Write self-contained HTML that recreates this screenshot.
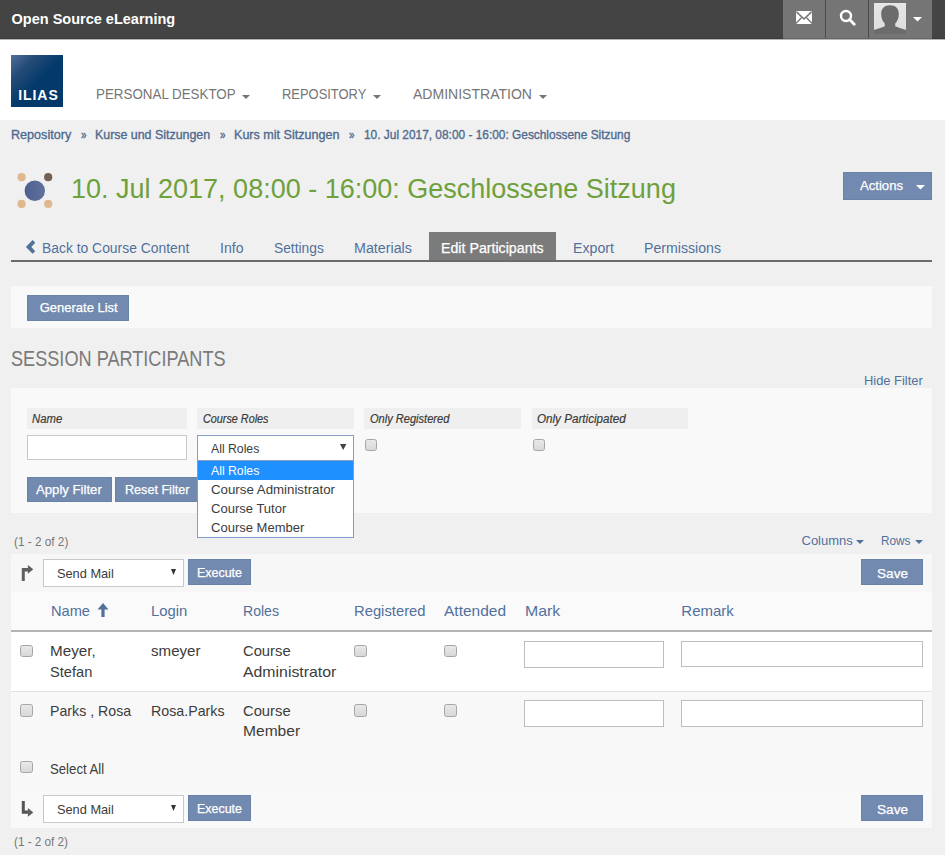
<!DOCTYPE html>
<html><head><meta charset="utf-8"><title>ILIAS</title>
<style>
html,body{margin:0;padding:0;}
body{width:945px;height:855px;overflow:hidden;position:relative;background:#f0f0f0;font-family:"Liberation Sans",sans-serif;}
body>div,body>span,body>svg{position:absolute;}
.t{white-space:nowrap;line-height:1;transform-origin:0 0;}
</style></head><body>
<div style="left:0px;top:0px;width:945px;height:39px;background:#444;"></div>
<div style="left:783px;top:0px;width:149px;height:39px;background:#757575;"></div>
<div style="left:825px;top:0px;width:1px;height:39px;background:#4a4a4a;"></div>
<div style="left:868px;top:0px;width:1px;height:39px;background:#4a4a4a;"></div>
<div style="left:0px;top:38px;width:945px;height:1px;background:#3a3a3a;"></div>
<div style="left:783px;top:38px;width:149px;height:1px;background:#666;"></div>
<div style="left:0px;top:39px;width:945px;height:1px;background:#b5b5b5;"></div>
<span class="t" style="left:11.60px;top:11.98px;font-size:14.5px;color:#fff;font-weight:bold;">Open Source eLearning</span>
<svg style="left:796px;top:11px" width="16" height="13" viewBox="0 0 16 13"><rect x="0" y="0" width="16" height="13" fill="#fff"/><path d="M0.5 0.8 L8 8 L15.5 0.8" stroke="#757575" stroke-width="1.6" fill="none"/><path d="M0 12.5 L5.6 6.5 M16 12.5 L10.4 6.5" stroke="#757575" stroke-width="1.2" fill="none"/></svg>
<svg style="left:839px;top:9px" width="17" height="17" viewBox="0 0 17 17"><circle cx="7" cy="7" r="5" stroke="#fff" stroke-width="2.4" fill="none"/><path d="M10.6 10.6 L15.2 15.2" stroke="#fff" stroke-width="2.8" stroke-linecap="round"/></svg>
<svg style="left:874px;top:3px" width="32" height="31" viewBox="0 0 32 31"><defs><linearGradient id="av" x1="0" y1="0" x2="0" y2="1"><stop offset="0" stop-color="#e6e6e6"/><stop offset="1" stop-color="#dcdcdc"/></linearGradient></defs><rect width="32" height="31" fill="url(#av)"/><path d="M16 2.2 C10.5 2.2 7.2 5.5 7.2 11 C7.2 15 8.6 18.5 10.8 20.5 L10.8 23.3 C6.5 25.2 2.5 26.3 0 27 L0 31 L32 31 L32 27 C29.5 26.3 25.5 25.2 21.2 23.3 L21.2 20.5 C23.4 18.5 24.8 15 24.8 11 C24.8 5.5 21.5 2.2 16 2.2 Z" fill="#6c6c6c"/></svg>
<svg style="left:913px;top:16.5px" width="9" height="5" viewBox="0 0 9 5"><path d="M0 0 L9 0 L4.5 4.5 Z" fill="#fff"/></svg>
<div style="left:0px;top:40px;width:945px;height:80px;background:#fff;"></div>
<div style="left:11px;top:55px;width:52px;height:52px;background:linear-gradient(135deg,#52709a 0%,#244b77 25%,#053b6b 50%,#013869 100%);"></div>
<span class="t" style="left:18.20px;top:87.60px;font-size:14px;color:#fff;font-weight:bold;letter-spacing:0.95px;">ILIAS</span>
<span class="t" style="left:95.70px;top:85.83px;font-size:15.5px;color:#757575;transform:scaleX(0.8626);">PERSONAL DESKTOP</span>
<svg style="left:241.8px;top:95px" width="8" height="4" viewBox="0 0 8 4"><path d="M0 0 L8 0 L4 4 Z" fill="#757575"/></svg>
<span class="t" style="left:281.70px;top:85.83px;font-size:15.5px;color:#757575;transform:scaleX(0.8340);">REPOSITORY</span>
<svg style="left:372.8px;top:95px" width="8" height="4" viewBox="0 0 8 4"><path d="M0 0 L8 0 L4 4 Z" fill="#757575"/></svg>
<span class="t" style="left:413.30px;top:85.83px;font-size:15.5px;color:#757575;transform:scaleX(0.9052);">ADMINISTRATION</span>
<svg style="left:539px;top:95px" width="8" height="4" viewBox="0 0 8 4"><path d="M0 0 L8 0 L4 4 Z" fill="#757575"/></svg>
<span class="t" style="left:11.40px;top:127.95px;font-size:13px;color:#4f6a8f;transform:scaleX(0.9688);-webkit-text-stroke:0.35px #4f6a8f;">Repository</span>
<span class="t" style="left:80.80px;top:127.95px;font-size:13px;color:#4f6a8f;transform:scaleX(0.7609);-webkit-text-stroke:0.35px #4f6a8f;">»</span>
<span class="t" style="left:95.20px;top:127.95px;font-size:13px;color:#4f6a8f;transform:scaleX(0.9537);-webkit-text-stroke:0.35px #4f6a8f;">Kurse und Sitzungen</span>
<span class="t" style="left:219.80px;top:127.95px;font-size:13px;color:#4f6a8f;transform:scaleX(0.7609);-webkit-text-stroke:0.35px #4f6a8f;">»</span>
<span class="t" style="left:234.30px;top:127.95px;font-size:13px;color:#4f6a8f;transform:scaleX(0.9660);-webkit-text-stroke:0.35px #4f6a8f;">Kurs mit Sitzungen</span>
<span class="t" style="left:348.60px;top:127.95px;font-size:13px;color:#4f6a8f;transform:scaleX(0.7609);-webkit-text-stroke:0.35px #4f6a8f;">»</span>
<span class="t" style="left:363.80px;top:127.95px;font-size:13px;color:#4f6a8f;transform:scaleX(0.9143);-webkit-text-stroke:0.35px #4f6a8f;">10. Jul 2017, 08:00 - 16:00: Geschlossene Sitzung</span>
<svg style="left:14px;top:170px" width="42" height="42" viewBox="14 170 42 42"><circle cx="21.6" cy="177.2" r="4.1" fill="#dfb88e"/><circle cx="48.2" cy="177.2" r="4.1" fill="#736253"/><circle cx="21.6" cy="203.9" r="4.1" fill="#dfb88e"/><circle cx="48.2" cy="203.9" r="4.1" fill="#dfb88e"/><defs><linearGradient id="g1" x1="0" x2="1"><stop offset="0" stop-color="#4c5f8f"/><stop offset="1" stop-color="#60729d"/></linearGradient></defs><circle cx="34.8" cy="190.7" r="10.2" fill="url(#g1)"/></svg>
<span class="t" style="left:71.00px;top:175.85px;font-size:27px;color:#6ea03c;">10. Jul 2017, 08:00 - 16:00: Geschlossene Sitzung</span>
<div style="left:843px;top:172px;width:89px;height:28px;background:#728ab0;box-shadow:inset 0 0 0 1px #6882a8;"></div>
<span class="t" style="left:859.80px;top:178.95px;font-size:13px;color:#fff;transform:scaleX(1.0088);-webkit-text-stroke:0.25px #fff;">Actions</span>
<svg style="left:916px;top:185px" width="9" height="5" viewBox="0 0 9 5"><path d="M0 0 L9 0 L4.5 4.5 Z" fill="#fff"/></svg>
<div style="left:11px;top:260px;width:921px;height:2px;background:#6b6b6b;"></div>
<div style="left:428.5px;top:232px;width:127px;height:28px;background:#7b7b7b;"></div>
<svg style="left:20px;top:236px" width="20" height="22" viewBox="20 236 20 22"><path d="M25.9 247.1 L32.6 240.1 L35.2 242.8 L31.3 247.1 L35.2 251.3 L32.6 253.7 Z" fill="#52709c"/></svg>
<span class="t" style="left:41.90px;top:241.10px;font-size:14px;color:#52709c;transform:scaleX(0.9910);">Back to Course Content</span>
<span class="t" style="left:219.70px;top:241.10px;font-size:14px;color:#52709c;transform:scaleX(1.0063);">Info</span>
<span class="t" style="left:273.70px;top:241.10px;font-size:14px;color:#52709c;transform:scaleX(0.9845);">Settings</span>
<span class="t" style="left:353.70px;top:241.10px;font-size:14px;color:#52709c;transform:scaleX(1.0194);">Materials</span>
<span class="t" style="left:441.00px;top:241.10px;font-size:14px;color:#fff;transform:scaleX(1.0142);-webkit-text-stroke:0.25px #fff;">Edit Participants</span>
<span class="t" style="left:573.00px;top:241.10px;font-size:14px;color:#52709c;transform:scaleX(1.0133);">Export</span>
<span class="t" style="left:643.50px;top:241.10px;font-size:14px;color:#52709c;transform:scaleX(1.0099);">Permissions</span>
<div style="left:11px;top:286px;width:921px;height:42px;background:#f9f9f9;"></div>
<div style="left:27px;top:295px;width:102px;height:26px;background:#728ab0;box-shadow:inset 0 0 0 1px #6882a8;"></div>
<span class="t" style="left:39.70px;top:301.35px;font-size:13px;color:#fff;-webkit-text-stroke:0.25px #fff;">Generate List</span>
<span class="t" style="left:11.40px;top:347.77px;font-size:22.5px;color:#7a7a7a;transform:scaleX(0.8058);">SESSION PARTICIPANTS</span>
<span class="t" style="left:864.30px;top:374.02px;font-size:13.5px;color:#52709c;transform:scaleX(0.9558);">Hide Filter</span>
<div style="left:11px;top:388px;width:921px;height:125px;background:#f9f9f9;"></div>
<div style="left:27px;top:407.5px;width:160px;height:21.5px;background:#efefef;"></div>
<span class="t" style="left:32.40px;top:413.00px;font-size:12px;color:#3a3a3a;font-style:italic;transform:scaleX(0.9433);-webkit-text-stroke:0.2px #3a3a3a;">Name</span>
<div style="left:197.4px;top:407.5px;width:156.5px;height:21.5px;background:#efefef;"></div>
<span class="t" style="left:202.80px;top:413.00px;font-size:12px;color:#3a3a3a;font-style:italic;transform:scaleX(0.9010);-webkit-text-stroke:0.2px #3a3a3a;">Course Roles</span>
<div style="left:364.1px;top:407.5px;width:157px;height:21.5px;background:#efefef;"></div>
<span class="t" style="left:369.50px;top:413.00px;font-size:12px;color:#3a3a3a;font-style:italic;transform:scaleX(0.9217);-webkit-text-stroke:0.2px #3a3a3a;">Only Registered</span>
<div style="left:532px;top:407.5px;width:156px;height:21.5px;background:#efefef;"></div>
<span class="t" style="left:537.40px;top:413.00px;font-size:12px;color:#3a3a3a;font-style:italic;transform:scaleX(0.9705);-webkit-text-stroke:0.2px #3a3a3a;">Only Participated</span>
<div style="left:27px;top:434.8px;width:160px;height:25.7px;background:#fff;border:1px solid #c8c8c8;box-sizing:border-box;"></div>
<div style="left:364.5px;top:438.5px;width:12.5px;height:12.5px;box-sizing:border-box;border:1.3px solid #a6a6a6;border-radius:2.5px;background:linear-gradient(#e8e8e8,#d8d8d8);"></div>
<div style="left:532.5px;top:438.5px;width:12.5px;height:12.5px;box-sizing:border-box;border:1.3px solid #a6a6a6;border-radius:2.5px;background:linear-gradient(#e8e8e8,#d8d8d8);"></div>
<div style="left:27px;top:476.5px;width:84.5px;height:25.7px;background:#728ab0;box-shadow:inset 0 0 0 1px #6882a8;"></div>
<span class="t" style="left:36.10px;top:483.15px;font-size:13px;color:#fff;transform:scaleX(1.0119);-webkit-text-stroke:0.25px #fff;">Apply Filter</span>
<div style="left:115px;top:476.5px;width:90px;height:25.7px;background:#728ab0;box-shadow:inset 0 0 0 1px #6882a8;"></div>
<span class="t" style="left:124.60px;top:483.15px;font-size:13px;color:#fff;transform:scaleX(0.9691);-webkit-text-stroke:0.25px #fff;">Reset Filter</span>
<div style="left:197.4px;top:434.5px;width:156.5px;height:26.5px;background:#fff;border:1px solid #869dc6;box-sizing:border-box;"></div>
<span class="t" style="left:211.10px;top:442.25px;font-size:13px;color:#3c3c3c;transform:scaleX(0.9416);">All Roles</span>
<svg style="left:340.3px;top:443.8px" width="6.4" height="6" viewBox="0 0 6.4 6"><path d="M0 0 L6.4 0 L3.2 6 Z" fill="#444"/></svg>
<div style="left:197.4px;top:461px;width:156.5px;height:76.8px;background:#fff;border:1px solid #7f9ccf;border-top:0;box-sizing:border-box;"></div>
<div style="left:198.4px;top:461px;width:154.5px;height:19px;background:#1e90ff;"></div>
<span class="t" style="left:211.10px;top:464.35px;font-size:13px;color:#fff;transform:scaleX(0.9416);">All Roles</span>
<span class="t" style="left:211.10px;top:482.85px;font-size:13px;color:#3c3c3c;transform:scaleX(1.0216);">Course Administrator</span>
<span class="t" style="left:211.10px;top:501.55px;font-size:13px;color:#3c3c3c;">Course Tutor</span>
<span class="t" style="left:211.10px;top:520.65px;font-size:13px;color:#3c3c3c;">Course Member</span>
<span class="t" style="left:14.00px;top:535.80px;font-size:12px;color:#777;transform:scaleX(0.9809);">(1 - 2 of 2)</span>
<span class="t" style="left:801.50px;top:534.45px;font-size:13px;color:#52709c;">Columns</span>
<svg style="left:856px;top:540px" width="8" height="4" viewBox="0 0 8 4"><path d="M0 0 L8 0 L4 4 Z" fill="#52709c"/></svg>
<span class="t" style="left:881.00px;top:534.45px;font-size:13px;color:#52709c;transform:scaleX(0.9073);">Rows</span>
<svg style="left:914.5px;top:540px" width="8" height="4" viewBox="0 0 8 4"><path d="M0 0 L8 0 L4 4 Z" fill="#52709c"/></svg>
<div style="left:11px;top:553.7px;width:921px;height:38.6px;background:#f7f7f7;"></div>
<div style="left:11px;top:592.3px;width:921px;height:38px;background:#fafafa;"></div>
<div style="left:11px;top:630px;width:921px;height:2px;background:#b4b4b4;"></div>
<div style="left:11px;top:632px;width:921px;height:59px;background:#fff;"></div>
<div style="left:11px;top:691px;width:921px;height:1px;background:#e2e2e2;"></div>
<div style="left:11px;top:692px;width:921px;height:98px;background:#f8f8f8;"></div>
<div style="left:11px;top:790px;width:921px;height:38px;background:#f9f9f9;"></div>
<svg style="left:16px;top:560px" width="24" height="26" viewBox="16 560 24 26"><path d="M21.8 581 L21.8 568 L28.5 568 L28.5 571.6 L24.8 571.6 L24.8 581 Z" fill="#606060"/><path d="M27.9 564.9 L33.3 569.3 L27.9 573.7 Z" fill="#606060"/></svg>
<div style="left:43px;top:559.4px;width:140.5px;height:27.2px;background:#fff;border:1px solid #c8c8c8;box-sizing:border-box;"></div>
<span class="t" style="left:56.60px;top:566.95px;font-size:13px;color:#3c3c3c;transform:scaleX(0.9825);">Send Mail</span>
<svg style="left:170.6px;top:568.6px" width="5" height="6" viewBox="0 0 5 6"><path d="M0 0 L5 0 L2.5 6 Z" fill="#333"/></svg>
<div style="left:187.8px;top:559.1px;width:63.6px;height:25.8px;background:#728ab0;box-shadow:inset 0 0 0 1px #6882a8;"></div>
<span class="t" style="left:197.00px;top:566.05px;font-size:13px;color:#fff;transform:scaleX(0.9581);-webkit-text-stroke:0.25px #fff;">Execute</span>
<div style="left:860.8px;top:558.9px;width:62.5px;height:25.9px;background:#728ab0;box-shadow:inset 0 0 0 1px #6882a8;"></div>
<span class="t" style="left:876.50px;top:566.65px;font-size:13px;color:#fff;transform:scaleX(1.0463);-webkit-text-stroke:0.25px #fff;">Save</span>
<svg style="left:16px;top:796px" width="24" height="26" viewBox="16 796 24 26"><path d="M21.8 801 L24.8 801 L24.8 810.6 L28.5 810.6 L28.5 813.8 L21.8 813.8 Z" fill="#555"/><path d="M27.9 808 L33.3 812.4 L27.9 816.8 Z" fill="#606060"/></svg>
<div style="left:43px;top:795.4px;width:140.5px;height:27.2px;background:#fff;border:1px solid #c8c8c8;box-sizing:border-box;"></div>
<span class="t" style="left:56.60px;top:802.95px;font-size:13px;color:#3c3c3c;transform:scaleX(0.9825);">Send Mail</span>
<svg style="left:170.6px;top:804.6px" width="5" height="6" viewBox="0 0 5 6"><path d="M0 0 L5 0 L2.5 6 Z" fill="#333"/></svg>
<div style="left:187.8px;top:795.1px;width:63.6px;height:25.8px;background:#728ab0;box-shadow:inset 0 0 0 1px #6882a8;"></div>
<span class="t" style="left:197.00px;top:802.05px;font-size:13px;color:#fff;transform:scaleX(0.9581);-webkit-text-stroke:0.25px #fff;">Execute</span>
<div style="left:860.8px;top:794.9px;width:62.5px;height:25.9px;background:#728ab0;box-shadow:inset 0 0 0 1px #6882a8;"></div>
<span class="t" style="left:876.50px;top:802.65px;font-size:13px;color:#fff;transform:scaleX(1.0463);-webkit-text-stroke:0.25px #fff;">Save</span>
<span class="t" style="left:50.90px;top:603.15px;font-size:15px;color:#52709c;transform:scaleX(0.9745);">Name</span>
<span class="t" style="left:150.90px;top:603.15px;font-size:15px;color:#52709c;transform:scaleX(0.9890);">Login</span>
<span class="t" style="left:242.70px;top:603.15px;font-size:15px;color:#52709c;transform:scaleX(0.9360);">Roles</span>
<span class="t" style="left:354.40px;top:603.15px;font-size:15px;color:#52709c;transform:scaleX(0.9857);">Registered</span>
<span class="t" style="left:444.30px;top:603.15px;font-size:15px;color:#52709c;transform:scaleX(1.0326);">Attended</span>
<span class="t" style="left:524.50px;top:603.15px;font-size:15px;color:#52709c;transform:scaleX(1.0582);">Mark</span>
<span class="t" style="left:681.30px;top:603.15px;font-size:15px;color:#52709c;">Remark</span>
<svg style="left:97px;top:603.4px" width="12" height="14" viewBox="0 0 12 14"><path d="M6 0 L11.5 6.5 L7.6 6.5 L7.6 14 L4.4 14 L4.4 6.5 L0.5 6.5 Z" fill="#52709c"/></svg>
<div style="left:20px;top:644.8px;width:12.5px;height:12.5px;box-sizing:border-box;border:1.3px solid #a6a6a6;border-radius:2.5px;background:linear-gradient(#e8e8e8,#d8d8d8);"></div>
<span class="t" style="left:50.30px;top:643.05px;font-size:15px;color:#3c3c3c;transform:scaleX(1.0152);">Meyer,</span>
<span class="t" style="left:50.30px;top:664.05px;font-size:15px;color:#3c3c3c;transform:scaleX(0.9754);">Stefan</span>
<span class="t" style="left:150.50px;top:643.05px;font-size:15px;color:#3c3c3c;transform:scaleX(1.0067);">smeyer</span>
<span class="t" style="left:242.70px;top:643.05px;font-size:15px;color:#3c3c3c;transform:scaleX(0.9843);">Course</span>
<span class="t" style="left:242.70px;top:664.05px;font-size:15px;color:#3c3c3c;transform:scaleX(1.0558);">Administrator</span>
<div style="left:354.1px;top:644.7px;width:12.5px;height:12.5px;box-sizing:border-box;border:1.3px solid #a6a6a6;border-radius:2.5px;background:linear-gradient(#e8e8e8,#d8d8d8);"></div>
<div style="left:444px;top:644.7px;width:12.5px;height:12.5px;box-sizing:border-box;border:1.3px solid #a6a6a6;border-radius:2.5px;background:linear-gradient(#e8e8e8,#d8d8d8);"></div>
<div style="left:524px;top:640.5px;width:140.2px;height:27px;background:#fff;border:1px solid #bdbdbd;box-sizing:border-box;"></div>
<div style="left:681.1px;top:640.6px;width:242.2px;height:26.5px;background:#fff;border:1px solid #bdbdbd;box-sizing:border-box;"></div>
<div style="left:20px;top:704.3px;width:12.5px;height:12.5px;box-sizing:border-box;border:1.3px solid #a6a6a6;border-radius:2.5px;background:linear-gradient(#e8e8e8,#d8d8d8);"></div>
<span class="t" style="left:50.30px;top:702.65px;font-size:15px;color:#3c3c3c;transform:scaleX(0.9444);">Parks , Rosa</span>
<span class="t" style="left:150.50px;top:702.65px;font-size:15px;color:#3c3c3c;transform:scaleX(0.9481);">Rosa.Parks</span>
<span class="t" style="left:242.70px;top:702.65px;font-size:15px;color:#3c3c3c;transform:scaleX(0.9843);">Course</span>
<span class="t" style="left:242.70px;top:723.45px;font-size:15px;color:#3c3c3c;transform:scaleX(1.0378);">Member</span>
<div style="left:354.1px;top:704.2px;width:12.5px;height:12.5px;box-sizing:border-box;border:1.3px solid #a6a6a6;border-radius:2.5px;background:linear-gradient(#e8e8e8,#d8d8d8);"></div>
<div style="left:444px;top:704.2px;width:12.5px;height:12.5px;box-sizing:border-box;border:1.3px solid #a6a6a6;border-radius:2.5px;background:linear-gradient(#e8e8e8,#d8d8d8);"></div>
<div style="left:524px;top:700.0px;width:140.2px;height:27px;background:#fff;border:1px solid #bdbdbd;box-sizing:border-box;"></div>
<div style="left:681.1px;top:700.1px;width:242.2px;height:26.5px;background:#fff;border:1px solid #bdbdbd;box-sizing:border-box;"></div>
<div style="left:20px;top:760.5px;width:12.5px;height:12.5px;box-sizing:border-box;border:1.3px solid #a6a6a6;border-radius:2.5px;background:linear-gradient(#e8e8e8,#d8d8d8);"></div>
<span class="t" style="left:50.40px;top:762.10px;font-size:14px;color:#3c3c3c;transform:scaleX(0.9413);">Select All</span>
<span class="t" style="left:14.20px;top:835.80px;font-size:12px;color:#777;transform:scaleX(0.9755);">(1 - 2 of 2)</span>
</body></html>
